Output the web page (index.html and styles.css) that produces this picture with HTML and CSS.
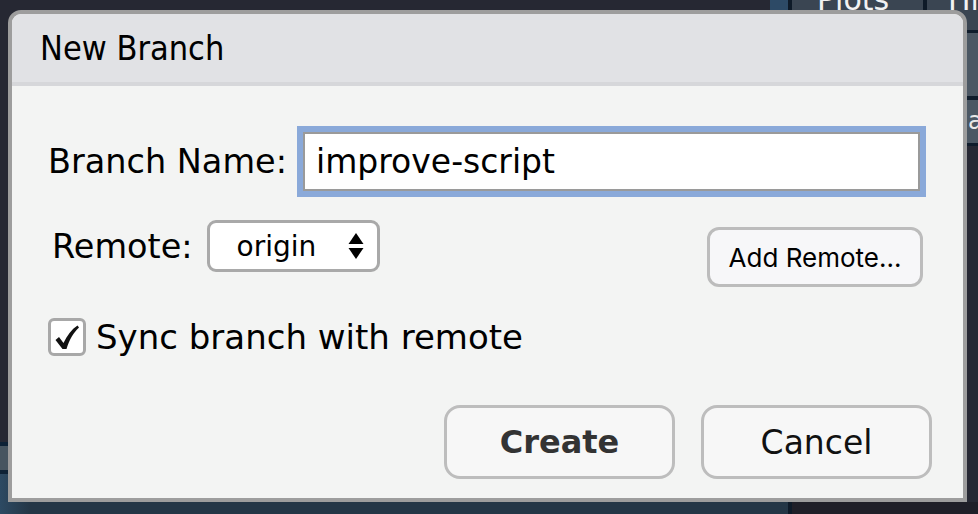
FILE: index.html
```html
<!DOCTYPE html>
<html>
<head>
<meta charset="utf-8">
<link rel="stylesheet" href="styles.css">
</head>
<body>
<div class="desktop">
  <div class="left-pane">
    <div class="lp-main"><div class="lp-top"><span class="lp-btn"></span></div></div>
    <div class="lp-status"></div>
    <div class="lp-bottom"></div>
  </div>
  <div class="right-pane">
    <div class="tabs">
      <div class="tab tab-plots"><span class="tab-label">Plots</span></div>
      <div class="tab tab-hist"><span class="tab-label">History</span></div>
    </div>
    <div class="toolbar"></div>
    <div class="pathbar"><span class="path-text">al</span></div>
    <div class="rp-main"></div>
    <div class="rp-bottom"></div>
  </div>
</div>

<div class="dialog">
  <div class="dialog-header">New Branch</div>
  <div class="dialog-body">
    <div class="row row-name">
      <label class="label">Branch Name:</label>
      <div class="field"><div class="field-inner">improve-script</div></div>
    </div>
    <div class="row row-remote">
      <label class="label label-remote">Remote:</label>
      <div class="select">
        <span class="select-text">origin</span>
        <svg class="select-arrows" width="16" height="27" viewBox="0 0 16 27"><path d="M8 0 L15.5 11 L0.5 11 Z" fill="#000"/><path d="M0.5 15 L15.5 15 L8 26 Z" fill="#000"/></svg>
      </div>
      <button class="btn-small">Add Remote...</button>
    </div>
    <div class="row row-check">
      <span class="checkbox"><svg width="32" height="32" viewBox="0 0 32 32"><path d="M4.5 19 L8 16 L12.5 22 C16 14.5 20.5 8.5 26.5 4.5 L28 6.5 C22.5 11.5 18.5 18.5 15.5 28 L11.5 28 Z" fill="#111"/></svg></span>
      <span class="check-label">Sync branch with remote</span>
    </div>
    <div class="row row-buttons">
      <button class="btn btn-primary">Create</button>
      <button class="btn">Cancel</button>
    </div>
  </div>
</div>
</body>
</html>
```

FILE: styles.css
```css
html, body {
  margin: 0;
  padding: 0;
}
body {
  width: 978px;
  height: 514px;
  overflow: hidden;
  background: #262833;
  font-family: "DejaVu Sans", sans-serif;
  position: relative;
}
.desktop {
  display: flex;
  width: 978px;
  height: 514px;
}
.left-pane {
  flex: none;
  width: 788px;
  display: flex;
  flex-direction: column;
}
.lp-main {
  flex: 1;
  background: #262833;
}
.lp-top {
  display: flex;
  justify-content: flex-end;
}
.lp-btn {
  display: block;
  width: 18px;
  height: 20px;
  background: #2d4a66;
}
.lp-status {
  height: 24px;
  background: #475560;
  border-top: 4px solid #0e2236;
  border-bottom: 4px solid #0e2236;
}
.lp-bottom {
  height: 40px;
  background: linear-gradient(90deg, #2d4a63 0, #243646 30px, #243646 100%);
}
.right-pane {
  flex: 1;
  min-width: 0;
  display: flex;
  flex-direction: column;
  border-left: 4px solid #0e1a28;
}
.tabs {
  height: 30px;
  display: flex;
  color: #f2f2f2;
  font-size: 30px;
}
.tab {
  background: #3a4552;
  overflow: hidden;
  line-height: 0;
}
.tab-plots {
  flex: none;
  width: 135px;
  padding-left: 25px;
  box-sizing: border-box;
  border-right: 4px solid #0e1a28;
}
.tab-hist {
  flex: 1;
  min-width: 0;
  padding-left: 21px;
}
.tab-label {
  display: block;
  margin-top: 0;
  white-space: nowrap;
}
.toolbar {
  height: 63px;
  background: #4b5763;
  border-top: 3px solid #0f1c2b;
  border-bottom: 4px solid #0f1c2b;
}
.pathbar {
  height: 43px;
  background: #4b5763;
  border-bottom: 3px solid #0f1c2b;
  color: #e8e8e8;
  font-size: 24px;
  line-height: 43px;
  padding-left: 176px;
  white-space: nowrap;
  overflow: hidden;
}
.rp-main {
  flex: 1;
  background: #262833;
}
.rp-bottom {
  height: 12px;
  background: #1f1f28;
}

/* dialog overlay */
.dialog {
  position: absolute;
  left: 8px;
  top: 10px;
  width: 959px;
  height: 492px;
  box-sizing: border-box;
  border: 4px solid #9d9d9d;
  border-radius: 13px 13px 0 0;
  background: #f3f4f3;
  display: flex;
  flex-direction: column;
  overflow: hidden;
}
.dialog-header {
  height: 68px;
  flex: none;
  background: #e1e2e5;
  border-bottom: 4px solid #d6d7da;
  display: flex;
  align-items: center;
  padding-left: 28px;
  font-family: "DejaVu Sans Condensed", "Liberation Sans Narrow", "DejaVu Sans", sans-serif;
  font-size: 34px;
  color: #000;
}
.dialog-body {
  flex: 1;
  display: flex;
  flex-direction: column;
  padding: 40px 37px 0 36px;
}
.row {
  display: flex;
  align-items: center;
}
.label {
  font-size: 33.5px;
  color: #000;
  white-space: nowrap;
}
.field {
  margin-left: auto;
  width: 629px;
  height: 71px;
  box-sizing: border-box;
  border: 6px solid #8aa9d9;
  background: #8aa9d9;
}
.field-inner {
  height: 100%;
  box-sizing: border-box;
  border: 2px solid #9a9a9a;
  background: #fff;
  padding-left: 11px;
  font-size: 33px;
  display: flex;
  align-items: center;
  color: #000;
}
.row-remote {
  margin-top: 23px;
  align-items: flex-start;
}
.label-remote {
  margin-left: 4px;
  height: 52px;
  display: flex;
  align-items: center;
}
.select {
  margin-left: 14px;
  width: 173px;
  height: 52px;
  box-sizing: border-box;
  border: 3px solid #a9a9a9;
  border-radius: 9px;
  background: #fff;
  display: flex;
  align-items: center;
  padding-left: 27px;
}
.select-text {
  font-size: 28px;
  color: #000;
}
.select-arrows {
  margin-left: auto;
  margin-right: 13px;
}
.btn-small {
  margin-left: auto;
  margin-right: 3px;
  margin-top: 7px;
  width: 216px;
  height: 60px;
  box-sizing: border-box;
  border: 3px solid #bcbcbc;
  border-radius: 12px;
  background: #f7f7f9;
  font-family: "Inter", sans-serif;
  font-size: 26px;
  color: #000;
  padding: 0;
}
.row-check {
  margin-top: 30px;
}
.checkbox {
  width: 38px;
  height: 38px;
  box-sizing: border-box;
  border: 3px solid #a8a8a8;
  border-radius: 6px;
  background: #fff;
  display: flex;
  align-items: center;
  justify-content: center;
}
.checkbox svg {
  display: block;
}
.check-label {
  margin-left: 10px;
  font-size: 34px;
  color: #000;
  white-space: nowrap;
}
.row-buttons {
  margin-top: 48px;
  justify-content: flex-end;
  gap: 26px;
  margin-right: -6px;
}
.btn {
  width: 231px;
  height: 74px;
  box-sizing: border-box;
  border: 3px solid #bdbdbd;
  border-radius: 16px;
  background: #f7f7f7;
  font-family: "DejaVu Sans", sans-serif;
  font-size: 33px;
  color: #111;
  padding: 0;
}
.btn-primary {
  font-weight: bold;
  font-size: 32px;
  color: #333;
}
```
